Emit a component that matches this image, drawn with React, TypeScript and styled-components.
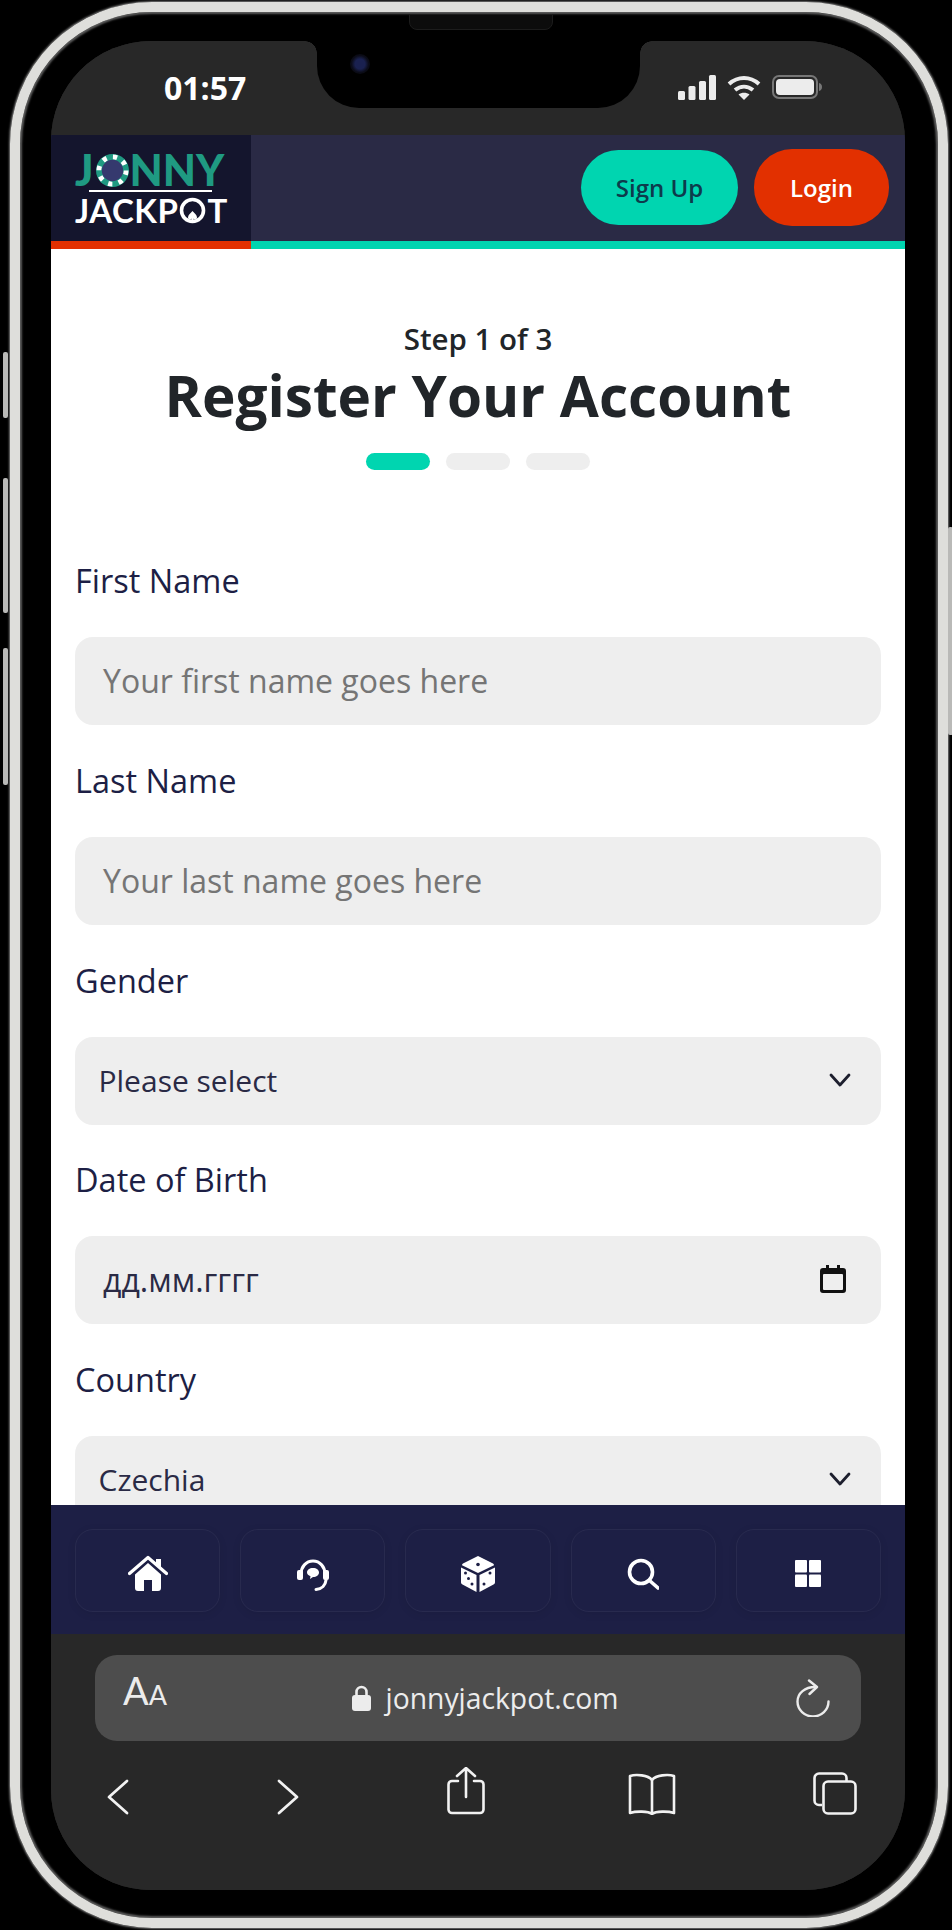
import React from 'react'
import styled, { createGlobalStyle } from 'styled-components'

const GlobalStyle = createGlobalStyle`
  html, body {
    margin: 0;
    background: #000;
  }
  * {
    box-sizing: border-box;
  }
`

const Page = styled.div`
  width: 952px;
  height: 1930px;
  padding: 2px 4px 2px 10px;
  background: #000;
  font-family: 'Open Sans', 'Liberation Sans', sans-serif;
  overflow: hidden;
`

const Frame = styled.div`
  position: relative;
  width: 938px;
  height: 1926px;
  padding: 29px 33px 28px 31px;
  border: 10px solid #dededb;
  border-radius: 142px;
  box-shadow: inset 0 0 2px 2px #5c5c5c, 0 0 2px 1px #777;
`

const SideKey = styled.div<{ $top: number; $height: number; $right?: boolean }>`
  position: absolute;
  top: ${p => p.$top - 12}px;
  height: ${p => p.$height}px;
  width: 5px;
  background: #b9b9b7;
  border-radius: 2px;
  ${p => (p.$right ? 'right: -15px;' : 'left: -17px;')}
`

const Speaker = styled.div`
  position: absolute;
  top: 2px;
  left: 389px;
  width: 144px;
  height: 16px;
  background: #0c0c0c;
  border: 1px solid #1c1c1c;
  border-radius: 0 0 8px 8px;
`

const Screen = styled.div`
  width: 854px;
  height: 1849px;
  border-radius: 100px;
  overflow: hidden;
  background: #282828;
  display: flex;
  flex-direction: column;
`

const StatusBar = styled.div`
  height: 94px;
  flex: none;
  display: flex;
  background: #282828;
`

const Clock = styled.div`
  width: 266px;
  padding: 27px 0 0 113px;
  font-size: 32px;
  font-weight: 700;
  line-height: 40px;
  color: #fff;
`

const Notch = styled.div`
  position: relative;
  width: 323px;
  height: 67px;
  background: #000;
  border-radius: 0 0 42px 42px;

  &::before,
  &::after {
    content: '';
    position: absolute;
    top: 0;
    width: 12px;
    height: 12px;
  }
  &::before {
    left: -12px;
    background: radial-gradient(circle at 0 100%, transparent 11.5px, #000 12px);
  }
  &::after {
    right: -12px;
    background: radial-gradient(circle at 100% 100%, transparent 11.5px, #000 12px);
  }
`

const Camera = styled.div`
  position: absolute;
  top: 13px;
  left: 33px;
  width: 20px;
  height: 20px;
  border-radius: 50%;
  background: radial-gradient(circle, #1a2150 0 35%, #0b0c18 60%, #060608 100%);
`

const StatusIcons = styled.div`
  flex: 1;
  display: flex;
  align-items: flex-start;
  gap: 11px;
  padding: 34px 0 0 38px;
`

const Header = styled.header`
  height: 114px;
  flex: none;
  display: flex;
  background: #2a2a45;
  border-bottom: 8px solid #00d5b0;
`

const LogoBox = styled.div`
  position: relative;
  width: 200px;
  height: 114px;
  flex: none;
  margin-bottom: -8px;
  background: #14152d;
  border-bottom: 8px solid #e23000;
  padding: 18px 0 0 24px;
  font-family: Lato, 'Open Sans', sans-serif;
  font-weight: 900;
`

const LogoTop = styled.div`
  display: flex;
  align-items: center;
  height: 34px;
  font-size: 43px;
  line-height: 34px;
  letter-spacing: 0;
  color: #1f9a82;
`

const LogoRule = styled.div`
  width: 123px;
  height: 2px;
  margin: 3px 0 5px 14px;
  background: #fff;
`

const LogoBottom = styled.div`
  display: flex;
  align-items: center;
  height: 26px;
  font-size: 33px;
  line-height: 26px;
  font-weight: 700;
  letter-spacing: 0.5px;
  color: #fff;
`

const HeaderActions = styled.div`
  flex: 1;
  display: flex;
  justify-content: flex-end;
  align-items: center;
  gap: 16px;
  padding: 0 16px 1px 0;
`

const HeaderButton = styled.button<{ $variant: 'signup' | 'login' }>`
  height: ${p => (p.$variant === 'login' ? 77 : 75)}px;
  width: ${p => (p.$variant === 'login' ? 135 : 157)}px;
  border: 0;
  border-radius: 38px;
  font-family: inherit;
  font-size: 24px;
  font-weight: 600;
  background: ${p => (p.$variant === 'login' ? '#e23000' : '#00d5b0')};
  color: ${p => (p.$variant === 'login' ? '#fff' : '#0d3b4c')};
`

const Content = styled.main`
  flex: 1;
  min-height: 0;
  overflow: hidden;
  background: #fff;
  padding: 72px 24px 0;
`

const StepText = styled.div`
  text-align: center;
  font-size: 29.5px;
  font-weight: 600;
  line-height: 36px;
  color: #212529;
`

const Title = styled.h1`
  margin: 3px 0 0;
  text-align: center;
  font-size: 56.7px;
  font-weight: 700;
  line-height: 70px;
  color: #212529;
`

const Steps = styled.div`
  display: flex;
  justify-content: center;
  gap: 16px;
  margin: 23px 0 92px;
`

const StepBar = styled.div<{ $active?: boolean }>`
  width: 64px;
  height: 17px;
  border-radius: 9px;
  background: ${p => (p.$active ? '#00d5b0' : '#eee')};
`

const Label = styled.div`
  height: 40px;
  margin-bottom: 35px;
  font-size: 32.5px;
  font-weight: 500;
  line-height: 38px;
  color: #1d1f45;
`

const Control = styled.div<{ $select?: boolean; $muted?: boolean }>`
  display: flex;
  align-items: center;
  justify-content: space-between;
  height: 88px;
  margin-bottom: 36.75px;
  padding: 0 ${p => (p.$select ? 30 : 35)}px 0 ${p => (p.$select ? 23.5 : 28)}px;
  border-radius: 18px;
  background: #eee;
  font-size: ${p => (p.$select ? 30 : 32)}px;
  line-height: 40px;
  color: ${p => (p.$muted ? '#757575' : '#2a2a45')};

  svg {
    margin-top: -2px;
  }
`

const BottomNav = styled.nav`
  height: 129px;
  flex: none;
  display: grid;
  grid-template-columns: repeat(5, 1fr);
  gap: 20px;
  padding: 24px 24px 22px;
  background: #1d1f45;
`

const NavButton = styled.button`
  display: flex;
  align-items: center;
  justify-content: center;
  padding: 6px 0 0;
  border: 1px solid rgba(255, 255, 255, 0.05);
  border-radius: 18px;
  background: transparent;
  color: #fff;
  box-shadow: 0 2px 8px rgba(0, 0, 0, 0.08);
`

const Browser = styled.div`
  height: 256px;
  flex: none;
  padding: 21px 44px 0;
  background: #282828;
`

const UrlBar = styled.div`
  display: flex;
  align-items: center;
  justify-content: space-between;
  height: 86px;
  padding: 0 31px 0 28px;
  border-radius: 22px;
  background: #4d4d4d;
  color: #ececec;
`

const TextSize = styled.div`
  display: flex;
  align-items: baseline;
  width: 44px;
  margin-top: -12px;
  font-family: Lato, 'Open Sans', sans-serif;
  font-weight: 400;
  font-size: 38px;
  line-height: 40px;

  span {
    font-size: 27px;
  }
`

const Domain = styled.div`
  display: flex;
  align-items: center;
  gap: 15px;
  margin-left: 7px;
  font-size: 28.3px;
  line-height: 38px;
`

const Toolbar = styled.div`
  display: grid;
  grid-template-columns: 170px 170px 181px 185px 44px;
  align-items: end;
  margin-top: 26px;
  padding-left: 12px;
  color: #f2f2f2;
`

const Chevron = () => (
  <svg width="22" height="14" viewBox="0 0 22 14" fill="none" stroke="#1d1f2e" strokeWidth="2.8" strokeLinecap="round" strokeLinejoin="round">
    <path d="M2 2l9 10 9-10" />
  </svg>
)

const CalendarIcon = () => (
  <svg width="26" height="28" viewBox="0 0 26 28">
    <path fill="#111" d="M6 0h3v3h8V0h3v3h3a3 3 0 0 1 3 3v19a3 3 0 0 1-3 3H3a3 3 0 0 1-3-3V6a3 3 0 0 1 3-3h3z" />
    <rect x="3" y="9" width="20" height="16" rx="1" fill="#eee" />
  </svg>
)

const Chip = ({ size, inner }: { size: number; inner: string }) => (
  <svg width={size} height={size} viewBox="0 0 34 34" style={{ flex: 'none', margin: '0 1px 0 2px' }}>
    <circle cx="17" cy="17" r="17" fill="#1f9a82" />
    <circle cx="17" cy="17" r="14" fill="none" stroke="#fff" strokeWidth="5" strokeDasharray="4.400 6.600" />
    <circle cx="17" cy="17" r="11" fill={inner} />
  </svg>
)

const SpadeO = () => (
  <svg width="27" height="27" viewBox="0 0 27 27" style={{ flex: 'none', margin: '0 1px' }}>
    <circle cx="13.5" cy="13.5" r="11" fill="none" stroke="#fff" strokeWidth="3.600" />
    <path fill="#fff" d="M13.5 14c2.200 2.500 4.500 3.800 4.500 6.500 0 2-2.500 2.500-3.700 1l.9 4.500h-3.400l.9-4.500c-1.200 1.500-3.700 1-3.700-1 0-2.700 2.300-4 4.500-6.500z" />
  </svg>
)

const SignalIcon = () => (
  <svg width="38" height="25" viewBox="0 0 38 25" fill="#ececec">
    <rect x="0" y="16" width="7" height="9" rx="1.500" />
    <rect x="10.500" y="11" width="7" height="14" rx="1.500" />
    <rect x="21" y="6" width="7" height="19" rx="1.500" />
    <rect x="31" y="0" width="7" height="25" rx="1.500" />
  </svg>
)

const WifiIcon = () => (
  <svg width="34" height="25" viewBox="0 0 34 25" fill="none" stroke="#ececec" strokeWidth="4">
    <path d="M2 9c9-8 21-8 30 0" />
    <path d="M8 15c5.500-4.500 12.500-4.500 18 0" />
    <path d="M17 25l-5.500-5.500c3-2.500 8-2.500 11 0z" fill="#ececec" stroke="none" />
  </svg>
)

const BatteryIcon = () => (
  <svg width="50" height="24" viewBox="0 0 50 24">
    <rect x="1" y="1" width="44" height="22" rx="6" fill="none" stroke="#777" strokeWidth="2" />
    <rect x="4" y="4" width="38" height="16" rx="4" fill="#ececec" />
    <path d="M47 8c2 .5 3 2 3 4s-1 3.500-3 4z" fill="#777" />
  </svg>
)

const HomeIcon = () => (
  <svg width="40" height="37" viewBox="0 0 40 37" fill="#fff">
    <path d="M1.500 18.500L20 2.500l18.500 16" fill="none" stroke="#fff" strokeWidth="3.200" strokeLinecap="round" strokeLinejoin="round" />
    <path d="M28 4h5v9l-5-4.500z" />
    <path d="M20 8l13 11.500V33a3 3 0 0 1-3 3h-6V25h-8v11h-6a3 3 0 0 1-3-3V19.500z" />
  </svg>
)

const HeadsetIcon = () => (
  <svg width="34" height="34" viewBox="0 0 34 34" fill="#fff">
    <path d="M5 17C5 10 10 4 17 4s12 6 12 13" fill="none" stroke="#fff" strokeWidth="3" />
    <rect x="1" y="13" width="6" height="10" rx="2" />
    <rect x="27" y="13" width="6" height="10" rx="2" />
    <path d="M30 23c-.5 5-4 9-10 9.500" fill="none" stroke="#fff" strokeWidth="3" strokeLinecap="round" />
    <path d="M17 11c3.600 0 6 2 6 4.500S20.600 20 17 20l-3 2 .5-2.800c-2-.7-3.500-2-3.500-3.700 0-2.500 2.400-4.500 6-4.500z" />
  </svg>
)

const DiceIcon = () => (
  <svg width="34" height="36" viewBox="0 0 34 36">
    <path fill="#fff" d="M17 0l15 7.500a2 2 0 0 1 1 1.800L17 17 1 9.300a2 2 0 0 1 1-1.800z" />
    <path fill="#fff" d="M0 11.500l15.500 7.500v17L1.500 28.500A2.500 2.500 0 0 1 0 26z" />
    <path fill="#fff" d="M34 11.500L18.500 19v17l14-7.500A2.500 2.500 0 0 0 34 26z" />
    <g fill="#1d1f45">
      <circle cx="17" cy="8.500" r="1.800" />
      <circle cx="4.500" cy="17" r="1.500" />
      <circle cx="11" cy="28" r="1.500" />
      <circle cx="7.500" cy="22.500" r="1.500" />
      <circle cx="29" cy="17" r="1.500" />
      <circle cx="23" cy="28" r="1.500" />
    </g>
  </svg>
)

const SearchIcon = () => (
  <svg width="32" height="32" viewBox="0 0 32 32" fill="none" stroke="#fff" strokeWidth="3.600" strokeLinecap="round">
    <circle cx="14" cy="14" r="11.500" />
    <path d="M22.500 22.500L31 30" />
  </svg>
)

const GridIcon = () => (
  <svg width="26" height="27" viewBox="0 0 26 27" fill="#fff">
    <rect x="0" y="0" width="12" height="12.500" rx="1" />
    <rect x="14" y="0" width="12" height="12.500" rx="1" />
    <rect x="0" y="14.500" width="12" height="12.500" rx="1" />
    <rect x="14" y="14.500" width="12" height="12.500" rx="1" />
  </svg>
)

const LockIcon = () => (
  <svg width="19" height="26" viewBox="0 0 19 26" fill="#ececec">
    <path d="M4.500 11V7a5 5 0 0 1 10 0v4" fill="none" stroke="#ececec" strokeWidth="2.600" />
    <rect x="0" y="10" width="19" height="16" rx="3" />
  </svg>
)

const ReloadIcon = () => (
  <svg width="34" height="38" viewBox="0 0 34 38" fill="none" stroke="#ececec" strokeWidth="2.400" strokeLinecap="round" strokeLinejoin="round">
    <path d="M19 8C9 8 1.500 14 1.500 22.500a15.500 15 0 0 0 31 0" />
    <path d="M13 1.500L21 8l-7.500 7" />
  </svg>
)

const BackIcon = ({ flip }: { flip?: boolean }) => (
  <svg width="22" height="36" viewBox="0 0 22 36" fill="none" stroke="currentColor" strokeWidth="2.800" strokeLinecap="round" strokeLinejoin="round" style={flip ? { transform: 'scaleX(-1)' } : undefined}>
    <path d="M20 2L2 18l18 16" />
  </svg>
)

const ShareIcon = () => (
  <svg width="38" height="48" viewBox="0 0 38 48" fill="none" stroke="currentColor" strokeWidth="2.600" strokeLinecap="round" strokeLinejoin="round">
    <path d="M11 14H5a3.500 3.500 0 0 0-3.500 3.500v25A3.500 3.500 0 0 0 5 46h28a3.500 3.500 0 0 0 3.500-3.500v-25A3.500 3.500 0 0 0 33 14h-6" />
    <path d="M19 30V2M10 9l9-8 9 8" />
  </svg>
)

const BookIcon = () => (
  <svg width="48" height="42" viewBox="0 0 48 42" fill="none" stroke="currentColor" strokeWidth="2.600" strokeLinejoin="round">
    <path d="M24 7C20 2 8 1 2 3v37c6-2 18-2 22 1 4-3 16-3 22 -1V3c-6-2-18-1-22 4z" />
    <path d="M24 7v34" />
  </svg>
)

const TabsIcon = () => (
  <svg width="44" height="43" viewBox="0 0 44 43" fill="none" stroke="currentColor" strokeWidth="2.600" strokeLinejoin="round">
    <path d="M9 33H6a4.500 4.500 0 0 1-4.500-4.500V6A4.500 4.500 0 0 1 6 1.500h23A4.500 4.500 0 0 1 33.500 6v3" />
    <rect x="10.500" y="9.500" width="32" height="32" rx="4.500" />
  </svg>
)

export default function App() {
  return (
    <Page>
      <GlobalStyle />
      <Frame>
        <SideKey $top={352} $height={66} />
        <SideKey $top={478} $height={135} />
        <SideKey $top={648} $height={137} />
        <SideKey $right $top={527} $height={208} />
        <Speaker />
        <Screen>
          <StatusBar>
            <Clock>01:57</Clock>
            <Notch>
              <Camera />
            </Notch>
            <StatusIcons>
              <SignalIcon />
              <WifiIcon />
              <BatteryIcon />
            </StatusIcons>
          </StatusBar>
          <Header>
            <LogoBox>
              <LogoTop>
                J<Chip size={33} inner="#35396e" />NNY
              </LogoTop>
              <LogoRule />
              <LogoBottom>
                JACKP<SpadeO />T
              </LogoBottom>
            </LogoBox>
            <HeaderActions>
              <HeaderButton $variant="signup">Sign Up</HeaderButton>
              <HeaderButton $variant="login">Login</HeaderButton>
            </HeaderActions>
          </Header>
          <Content>
            <StepText>Step 1 of 3</StepText>
            <Title>Register Your Account</Title>
            <Steps>
              <StepBar $active />
              <StepBar />
              <StepBar />
            </Steps>
            <Label>First Name</Label>
            <Control $muted>Your first name goes here</Control>
            <Label>Last Name</Label>
            <Control $muted>Your last name goes here</Control>
            <Label>Gender</Label>
            <Control $select>
              Please select
              <Chevron />
            </Control>
            <Label>Date of Birth</Label>
            <Control>
              дд.мм.гггг
              <CalendarIcon />
            </Control>
            <Label>Country</Label>
            <Control $select>
              Czechia
              <Chevron />
            </Control>
          </Content>
          <BottomNav>
            <NavButton>
              <HomeIcon />
            </NavButton>
            <NavButton>
              <HeadsetIcon />
            </NavButton>
            <NavButton>
              <DiceIcon />
            </NavButton>
            <NavButton>
              <SearchIcon />
            </NavButton>
            <NavButton>
              <GridIcon />
            </NavButton>
          </BottomNav>
          <Browser>
            <UrlBar>
              <TextSize>
                A<span>A</span>
              </TextSize>
              <Domain>
                <LockIcon />
                jonnyjackpot.com
              </Domain>
              <ReloadIcon />
            </UrlBar>
            <Toolbar>
              <BackIcon />
              <BackIcon flip />
              <ShareIcon />
              <BookIcon />
              <TabsIcon />
            </Toolbar>
          </Browser>
        </Screen>
      </Frame>
    </Page>
  )
}
